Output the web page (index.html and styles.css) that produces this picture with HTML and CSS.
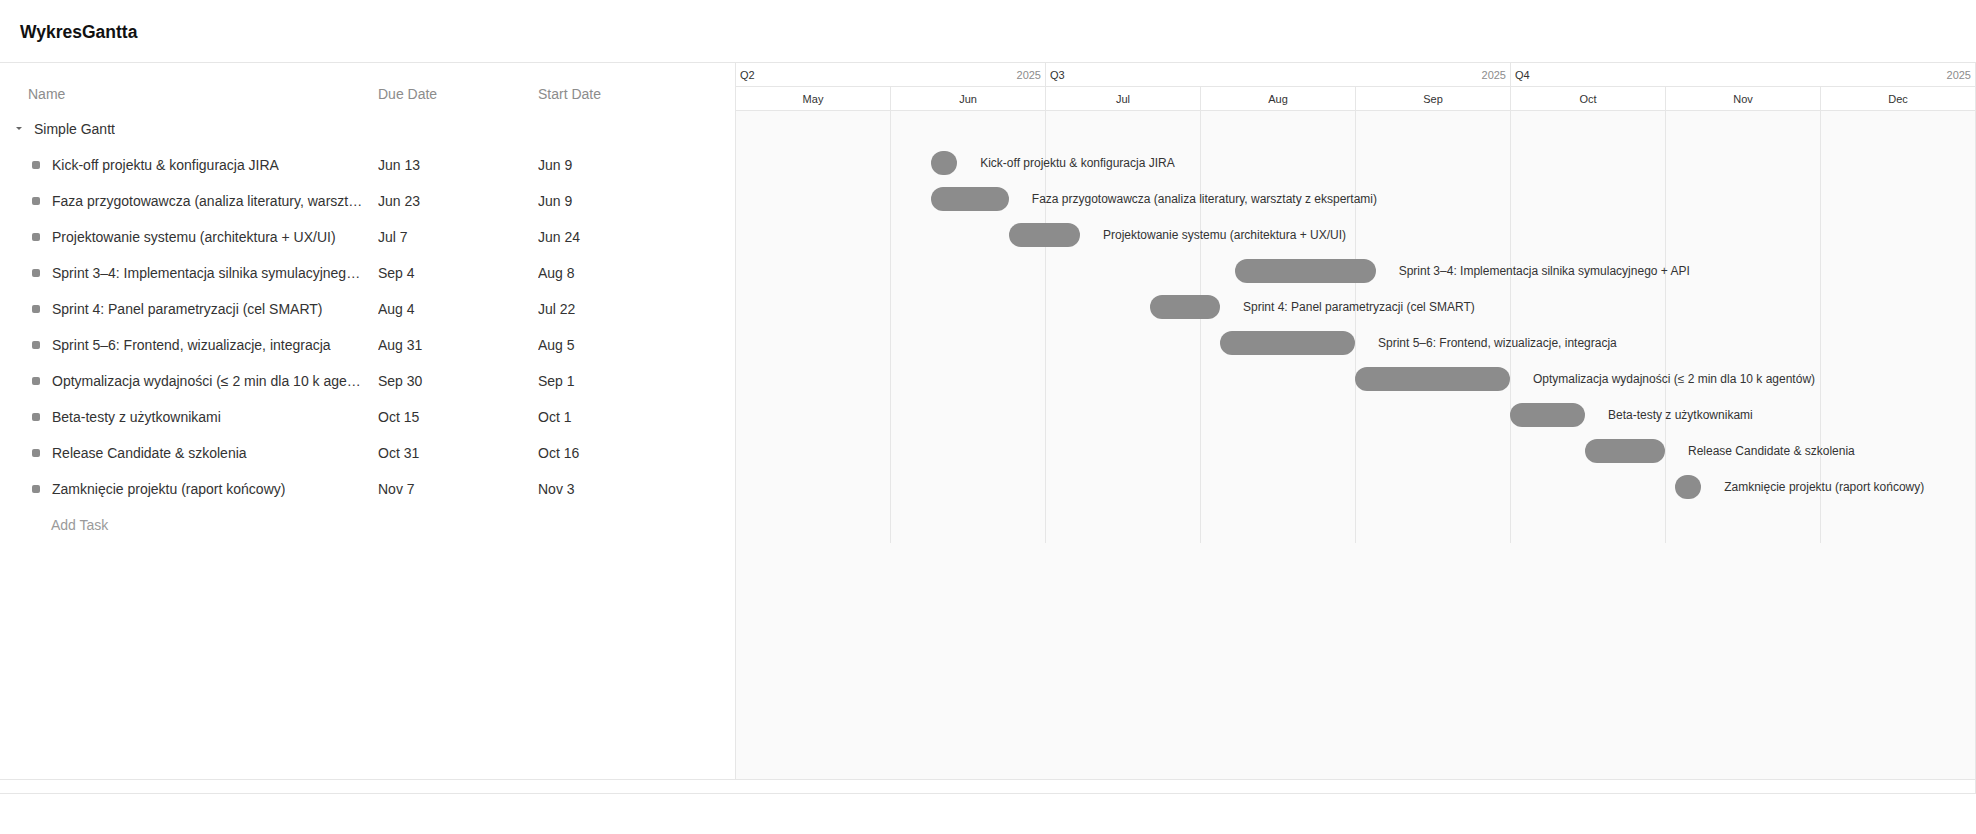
FILE: index.html
```html
<!DOCTYPE html>
<html lang="pl">
<head>
<meta charset="utf-8">
<title>WykresGantta</title>
<link rel="stylesheet" href="styles.css">
</head>
<body>
<div class="app">
  <header class="topbar">
    <h1 class="title">WykresGantta</h1>
  </header>
  <div class="gantt">
    <div class="grid-pane">
      <div class="grid-head">
        <div class="hcell hname">Name</div>
        <div class="hcell">Due Date</div>
        <div class="hcell">Start Date</div>
      </div>
      <div class="grid-row">
        <div class="cell cell-group"><span class="caret"></span><span class="txt">Simple Gantt</span></div>
        <div class="cell"></div>
        <div class="cell"></div>
      </div>
      <div class="grid-row">
        <div class="cell cell-task"><span class="dot"></span><span class="txt">Kick-off projektu &amp; konfiguracja JIRA</span></div>
        <div class="cell">Jun 13</div>
        <div class="cell">Jun 9</div>
      </div>
      <div class="grid-row">
        <div class="cell cell-task"><span class="dot"></span><span class="txt">Faza przygotowawcza (analiza literatury, warsztaty z ekspertami)</span></div>
        <div class="cell">Jun 23</div>
        <div class="cell">Jun 9</div>
      </div>
      <div class="grid-row">
        <div class="cell cell-task"><span class="dot"></span><span class="txt">Projektowanie systemu (architektura + UX/UI)</span></div>
        <div class="cell">Jul 7</div>
        <div class="cell">Jun 24</div>
      </div>
      <div class="grid-row">
        <div class="cell cell-task"><span class="dot"></span><span class="txt">Sprint 3–4: Implementacja silnika symulacyjnego + API</span></div>
        <div class="cell">Sep 4</div>
        <div class="cell">Aug 8</div>
      </div>
      <div class="grid-row">
        <div class="cell cell-task"><span class="dot"></span><span class="txt">Sprint 4: Panel parametryzacji (cel SMART)</span></div>
        <div class="cell">Aug 4</div>
        <div class="cell">Jul 22</div>
      </div>
      <div class="grid-row">
        <div class="cell cell-task"><span class="dot"></span><span class="txt">Sprint 5–6: Frontend, wizualizacje, integracja</span></div>
        <div class="cell">Aug 31</div>
        <div class="cell">Aug 5</div>
      </div>
      <div class="grid-row">
        <div class="cell cell-task"><span class="dot"></span><span class="txt">Optymalizacja wydajności (≤ 2 min dla 10 k agentów)</span></div>
        <div class="cell">Sep 30</div>
        <div class="cell">Sep 1</div>
      </div>
      <div class="grid-row">
        <div class="cell cell-task"><span class="dot"></span><span class="txt">Beta-testy z użytkownikami</span></div>
        <div class="cell">Oct 15</div>
        <div class="cell">Oct 1</div>
      </div>
      <div class="grid-row">
        <div class="cell cell-task"><span class="dot"></span><span class="txt">Release Candidate &amp; szkolenia</span></div>
        <div class="cell">Oct 31</div>
        <div class="cell">Oct 16</div>
      </div>
      <div class="grid-row">
        <div class="cell cell-task"><span class="dot"></span><span class="txt">Zamknięcie projektu (raport końcowy)</span></div>
        <div class="cell">Nov 7</div>
        <div class="cell">Nov 3</div>
      </div>
      <div class="grid-row">
        <div class="cell cell-add">Add Task</div>
      </div>
    </div>

    <div class="chart-pane">
      <div class="chart-head">
        <div class="q-row">
          <div class="q q-2"><span>Q2</span><span class="yr">2025</span></div>
          <div class="q q-3"><span>Q3</span><span class="yr">2025</span></div>
          <div class="q q-3"><span>Q4</span><span class="yr">2025</span></div>
        </div>
        <div class="m-row">
          <div class="m">May</div>
          <div class="m">Jun</div>
          <div class="m">Jul</div>
          <div class="m">Aug</div>
          <div class="m">Sep</div>
          <div class="m">Oct</div>
          <div class="m">Nov</div>
          <div class="m">Dec</div>
        </div>
      </div>
      <div class="chart-body">
        <div class="bars">
          <div class="bar-row"></div>
          <div class="bar-row"><div class="bar" style="margin-left:196.3px;width:25.9px"></div><span class="bar-label">Kick-off projektu &amp; konfiguracja JIRA</span></div>
          <div class="bar-row"><div class="bar" style="margin-left:196.3px;width:77.5px"></div><span class="bar-label">Faza przygotowawcza (analiza literatury, warsztaty z ekspertami)</span></div>
          <div class="bar-row"><div class="bar" style="margin-left:273.8px;width:71.2px"></div><span class="bar-label">Projektowanie systemu (architektura + UX/UI)</span></div>
          <div class="bar-row"><div class="bar" style="margin-left:500px;width:140.7px"></div><span class="bar-label">Sprint 3–4: Implementacja silnika symulacyjnego + API</span></div>
          <div class="bar-row"><div class="bar" style="margin-left:415px;width:70px"></div><span class="bar-label">Sprint 4: Panel parametryzacji (cel SMART)</span></div>
          <div class="bar-row"><div class="bar" style="margin-left:485px;width:135px"></div><span class="bar-label">Sprint 5–6: Frontend, wizualizacje, integracja</span></div>
          <div class="bar-row"><div class="bar" style="margin-left:620px;width:155px"></div><span class="bar-label">Optymalizacja wydajności (≤ 2 min dla 10 k agentów)</span></div>
          <div class="bar-row"><div class="bar" style="margin-left:775px;width:75px"></div><span class="bar-label">Beta-testy z użytkownikami</span></div>
          <div class="bar-row"><div class="bar" style="margin-left:850px;width:80px"></div><span class="bar-label">Release Candidate &amp; szkolenia</span></div>
          <div class="bar-row"><div class="bar" style="margin-left:940.3px;width:25.9px"></div><span class="bar-label">Zamknięcie projektu (raport końcowy)</span></div>
          <div class="bar-row"></div>
        </div>
      </div>
    </div>
  </div>
  <div class="hscroll"></div>
</div>
</body>
</html>
```

FILE: styles.css
```css
* { box-sizing: border-box; }

html, body {
  margin: 0;
  padding: 0;
  background: #ffffff;
}

body {
  font-family: "Liberation Sans", Arial, sans-serif;
  color: #333333;
  width: 1976px;
  height: 834px;
  overflow: hidden;
}

.topbar {
  height: 63px;
  border-bottom: 1px solid #e6e6e6;
  display: flex;
  align-items: center;
  padding-left: 20px;
}

.title {
  margin: 0;
  font-size: 17.5px;
  font-weight: bold;
  color: #111111;
  line-height: 1;
  margin-top: 4px;
}

.gantt {
  display: flex;
  height: 716px;
}

/* ---------- left grid ---------- */
.grid-pane {
  width: 735px;
  flex-shrink: 0;
  background: #ffffff;
}

.grid-head,
.grid-row {
  display: grid;
  grid-template-columns: 378px 160px 1fr;
  align-items: center;
}

.grid-head {
  height: 48px;
  padding-top: 14px;
}

.hcell {
  font-size: 14px;
  color: #8c8c8c;
}

.hname {
  padding-left: 28px;
}

.grid-row {
  height: 36px;
  font-size: 14px;
  color: #333333;
}

.cell {
  white-space: nowrap;
  overflow: hidden;
}

.cell-group {
  display: flex;
  align-items: center;
  padding-left: 16px;
}

.caret {
  width: 0;
  height: 0;
  border-left: 3px solid transparent;
  border-right: 3px solid transparent;
  border-top: 3px solid #666666;
  margin-right: 12px;
  margin-top: -2px;
}

.cell-task {
  display: flex;
  align-items: center;
  padding-left: 32px;
  padding-right: 12px;
}

.dot {
  width: 8px;
  height: 8px;
  border-radius: 2px;
  background: #8c8c8c;
  flex-shrink: 0;
  margin-right: 12px;
}

.txt {
  overflow: hidden;
  text-overflow: ellipsis;
  white-space: nowrap;
  min-width: 0;
}

.cell-add {
  padding-left: 51px;
  color: #9a9a9a;
}

/* ---------- chart ---------- */
.chart-pane {
  width: 1241px;
  flex-shrink: 0;
  border-left: 1px solid #e6e6e6;
  border-right: 1px solid #e6e6e6;
  background: #fafafa;
  display: flex;
  flex-direction: column;
  overflow: hidden;
}

.chart-head {
  background: #ffffff;
  font-size: 11px;
}

.q-row {
  display: flex;
  height: 24px;
  border-bottom: 1px solid #e6e6e6;
}

.q {
  display: flex;
  align-items: center;
  justify-content: space-between;
  padding: 0 4px 0 4px;
  color: #333333;
  flex-shrink: 0;
}

.q-2 { width: 309px; }
.q-3 { width: 465px; border-left: 1px solid #e6e6e6; }

.yr {
  color: #8c8c8c;
}

.m-row {
  display: flex;
  height: 24px;
  border-bottom: 1px solid #e6e6e6;
}

.m {
  width: 155px;
  flex-shrink: 0;
  display: flex;
  align-items: center;
  justify-content: center;
  color: #333333;
}

.m:first-child { width: 154px; }

.m + .m {
  border-left: 1px solid #e6e6e6;
}

.chart-body {
  flex: 1;
  background: #fafafa;
}

.bars {
  margin-left: -1px;
  background-image: linear-gradient(to right, #e6e6e6 1px, transparent 1px);
  background-size: 155px 100%;
  background-position: 0 0;
}

.bar-row {
  height: 36px;
  display: flex;
  align-items: flex-start;
  padding-top: 4px;
}

.bar {
  height: 24px;
  border-radius: 12px;
  background: #8c8c8c;
  flex-shrink: 0;
}

.bar-label {
  margin-left: 23px;
  line-height: 24px;
  font-size: 12px;
  color: #333333;
  white-space: nowrap;
}

.hscroll {
  height: 15px;
  border-top: 1px solid #e6e6e6;
  border-bottom: 1px solid #e6e6e6;
  border-right: 1px solid #e6e6e6;
}
```
